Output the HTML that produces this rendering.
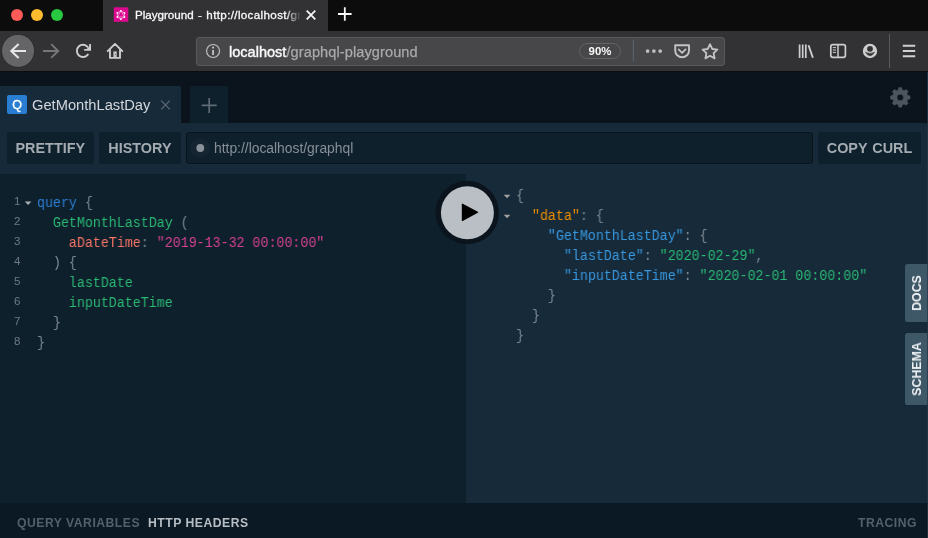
<!DOCTYPE html>
<html>
<head>
<meta charset="utf-8">
<title>Playground</title>
<style>
*{box-sizing:border-box;margin:0;padding:0}
html,body{width:928px;height:538px;overflow:hidden;background:#0b141c}
body{font-family:"Liberation Sans",sans-serif;position:relative;color:#fff}
.abs{position:absolute;will-change:transform}
/* ---------- browser chrome ---------- */
#titlebar{left:0;top:0;width:928px;height:31px;background:#0c0c0d}
#ffTab{left:103px;top:0;width:225px;height:31px;background:#323234}
#navbar{left:0;top:30.5px;width:928px;height:41px;background:#323234;border-bottom:1px solid #0c0c0d}
.light{width:12px;height:12px;border-radius:50%;top:9.25px}
#tabTitle{left:135px;top:7.2px;font-size:11.6px;color:#f9f9fa;white-space:nowrap;width:166px;overflow:hidden;height:16px;line-height:16px;word-spacing:1.2px;-webkit-text-stroke:.3px #f9f9fa}
#tabTitle span{letter-spacing:.36px}
#tabFade{left:286px;top:4px;width:16px;height:22px;background:linear-gradient(90deg,rgba(50,50,52,0),#323234 95%)}
#urlbar{left:196px;top:36.5px;width:529px;height:29px;background:#474749;border:1px solid #5a5a5c;border-radius:3px}
#urlText{left:228.9px;top:43.5px;font-size:14.55px;line-height:17px;color:#f9f9fa;white-space:nowrap;-webkit-text-stroke:.4px #f9f9fa}
#urlText span{color:#a9a9ab;-webkit-text-stroke:.25px #a9a9ab;letter-spacing:.1px}
#zoomPill{left:579px;top:43px;width:42px;height:16px;border:1px solid #636365;border-radius:8px;font-size:11.4px;line-height:14px;text-align:center;color:#f9f9fa;font-weight:bold}
/* ---------- playground ---------- */
#pgTab{left:0;top:86px;width:181px;height:38px;background:#172a3a;border-radius:0 2px 0 0}
#pgPlus{left:190px;top:86px;width:38px;height:37px;background:#0f202d;border-radius:2px 2px 0 0}
#qBadge{left:7px;top:94.8px;width:20px;height:19.2px;background:#2a7ed2;border-radius:2px;font-size:12.5px;font-weight:normal;-webkit-text-stroke:.35px #fff;line-height:20.6px;text-align:center;color:#fff}
#pgTabName{left:32px;top:97px;font-size:14.7px;line-height:17px;color:#d3d7db;white-space:nowrap}
#toolbar{left:0;top:123px;width:928px;height:53px;background:#172a3a}
.btn{top:132px;height:31.7px;background:#0f202d;border-radius:2px;font-size:14.4px;line-height:32px;text-align:center;color:#a3abb1;font-weight:bold;letter-spacing:0;white-space:nowrap}
#endpoint{left:186px;top:132px;width:627px;height:31.7px;background:#0f202d;border:1px solid #09141c;border-radius:3px}
#endpointText{left:213.7px;top:139.6px;font-size:13.85px;line-height:16px;color:#868f96;white-space:nowrap}
#leftPane{left:0;top:174px;width:466px;height:329px;background:#0f202d}
#rightPane{left:466px;top:173px;width:462px;height:330px;background:#172a3a}
#bottomBar{left:0;top:503px;width:928px;height:35px;background:#0b1924}
.code{font-family:"Liberation Mono",monospace;font-size:14px;line-height:20px;white-space:pre;transform:scaleX(.95);transform-origin:0 0;will-change:transform}
.ln{font-family:"Liberation Sans",sans-serif;font-size:11.6px;line-height:20px;color:#6d7a84;left:0;width:20.5px;text-align:right;margin-top:-.8px}
.bl{font-size:12.2px;font-weight:bold;letter-spacing:.5px;top:516px;line-height:15px;white-space:nowrap}
.side{left:905.1px;width:23px;background:#3f5868;border-radius:2.5px 0 0 2.5px}
.sideText{width:80px;height:20px;text-align:center;font-size:13px;font-weight:bold;color:#eef1f3;white-space:nowrap;transform:rotate(-90deg) scaleX(.95);line-height:20px}
.kw{color:#2a7ed3}.fn{color:#29b973}.arg{color:#f77466}.str{color:#d64292}.p{color:#7d8b95}.prop{color:#3898df}.key{color:#f18f01}.val{color:#29b973}
</style>
</head>
<body>
<!-- Title bar -->
<div id="titlebar" class="abs"></div>
<div id="ffTab" class="abs"></div>
<div class="abs light" style="left:11.25px;background:#fc5b57"></div>
<div class="abs light" style="left:31.2px;background:#fdbc2e"></div>
<div class="abs light" style="left:51.2px;background:#28c840"></div>
<div id="tabTitle" class="abs">Playground - <span>http://localhost/gr</span></div>
<div id="tabFade" class="abs"></div>
<!-- Nav bar -->
<div id="navbar" class="abs"></div>
<div id="urlbar" class="abs"></div>
<div id="urlText" class="abs">localhost<span>/graphql-playground</span></div>
<div id="zoomPill" class="abs">90%</div>

<!-- chrome icons -->
<svg class="abs" style="left:0;top:0" width="928" height="72" viewBox="0 0 928 72" fill="none">
 <!-- favicon -->
 <rect x="113.8" y="7.3" width="14.5" height="14.5" fill="#dc0990"/>
 <g stroke="#fff" stroke-width="0.7" fill="none" opacity=".7">
  <path d="M120.9 10.85 L124.45 12.9 L124.45 17 L120.9 19.05 L117.35 17 L117.35 12.9 Z"/>
  <path d="M120.9 10.85 L124.45 17 L117.35 17 Z"/>
 </g>
 <g fill="#fff">
  <circle cx="120.9" cy="10.85" r="0.9"/><circle cx="124.45" cy="12.9" r="0.9"/><circle cx="124.45" cy="17" r="0.9"/>
  <circle cx="120.9" cy="19.05" r="0.9"/><circle cx="117.35" cy="17" r="0.9"/><circle cx="117.35" cy="12.9" r="0.9"/>
 </g>
 <!-- tab close -->
 <path d="M306.7 10.7 L315.3 19.4 M315.3 10.7 L306.7 19.4" stroke="#f9f9fa" stroke-width="1.7"/>
 <!-- new tab + -->
 <path d="M344.8 7.2 V20.8 M338 14 H351.6" stroke="#f9f9fa" stroke-width="1.8"/>
 <!-- back -->
 <circle cx="18.05" cy="50.85" r="16.5" fill="#656567" stroke="#262628" stroke-width="0.8"/>
 <path d="M26 51 H11.2 M18.6 44 L11.3 51 L18.6 58" stroke="#e6e6e7" stroke-width="2.1" stroke-linecap="butt" stroke-linejoin="miter"/>
 <!-- forward (disabled) -->
 <path d="M43 51 H57.8 M51.2 44.1 L58.2 51 L51.2 57.9" stroke="#767678" stroke-width="2" stroke-linecap="butt" stroke-linejoin="miter"/>
 <!-- reload -->
 <path d="M87.6 46.9 A6.1 6.1 0 1 0 87.8 54.6" stroke="#cdcdce" stroke-width="1.9" stroke-linecap="round"/>
 <path d="M90.1 43.9 V49.9 H84.2" stroke="#cdcdce" stroke-width="1.8" stroke-linejoin="miter"/>
 <path d="M90.1 45.6 V49.9 H85.8 Z" fill="#cdcdce"/>
 <!-- home -->
 <path d="M107.7 51.2 L115 43.9 L122.3 51.2 M110 49.4 V57.9 H120 V49.4" stroke="#cdcdce" stroke-width="1.9" stroke-linecap="round" stroke-linejoin="round"/>
 <rect x="113.4" y="51.4" width="3.3" height="6.5" fill="#c6c6c7"/><circle cx="115.4" cy="54.5" r=".55" fill="#5a5a5c"/>
 <!-- url info -->
 <circle cx="213.05" cy="51" r="6.5" stroke="#c4c4c5" stroke-width="1.15"/>
 <path d="M213.05 50 V54.9" stroke="#c4c4c5" stroke-width="1.8"/>
 <circle cx="213.05" cy="47.6" r="1.05" fill="#c4c4c5"/>
 <!-- separator in urlbar -->
 <path d="M633.4 39.5 V61.5" stroke="#5b6778" stroke-width="1"/>
 <!-- dots -->
 <circle cx="647.6" cy="51.1" r="1.85" fill="#bdbdbe"/><circle cx="653.9" cy="51.1" r="1.85" fill="#bdbdbe"/><circle cx="660.2" cy="51.1" r="1.85" fill="#bdbdbe"/>
 <!-- pocket -->
 <path d="M675.2 45.2 H689 V50.4 A6.9 6.9 0 0 1 675.2 50.4 Z" stroke="#c4c4c5" stroke-width="1.9" stroke-linejoin="round"/>
 <path d="M678.6 49.4 L682.1 52.8 L685.6 49.4" stroke="#c4c4c5" stroke-width="1.7" stroke-linecap="round" stroke-linejoin="round"/>
 <!-- star -->
 <path d="M710 44.2 L712.3 49 L717.4 49.6 L713.6 53.2 L714.6 58.4 L710 55.8 L705.4 58.4 L706.4 53.2 L702.6 49.6 L707.7 49 Z" stroke="#c4c4c5" stroke-width="1.8" stroke-linejoin="round"/>
 <!-- library -->
 <path d="M799.6 44.4 V58 M802.7 44.4 V58 M805.8 44.4 V58" stroke="#cdcdce" stroke-width="1.7"/>
 <path d="M808.5 45.2 L812.9 57.7" stroke="#cdcdce" stroke-width="1.9"/>
 <!-- sidebar -->
 <rect x="830.8" y="44.7" width="14.6" height="12.6" rx="2" stroke="#cdcdce" stroke-width="1.7"/>
 <path d="M838 44.7 V57.3" stroke="#cdcdce" stroke-width="1.5"/>
 <path d="M832.8 47.6 H836 M832.8 50 H836 M832.8 52.4 H836" stroke="#cdcdce" stroke-width="1"/>
 <!-- account -->
 <circle cx="870" cy="51" r="7.2" fill="#cdcdce"/>
 <circle cx="870" cy="48.8" r="2.9" fill="#323234"/>
 <path d="M865.4 52.2 Q870 54.6 874.6 52.2 Q870 59.4 865.4 52.2 Z" fill="#323234" stroke="#323234" stroke-width=".5" stroke-linejoin="round"/>
 <!-- toolbar separator -->
 <path d="M889.5 34 V68" stroke="#5a5a5c" stroke-width="1"/>
 <!-- hamburger -->
 <path d="M902.8 45.8 H915.2 M902.8 51 H915.2 M902.8 56.2 H915.2" stroke="#d0d0d1" stroke-width="2"/>
</svg>

<!-- Playground tabs -->
<div id="pgTab" class="abs"></div>
<div id="pgPlus" class="abs"></div>
<div id="qBadge" class="abs">Q</div>
<div id="pgTabName" class="abs">GetMonthLastDay</div>

<svg class="abs" style="left:880px;top:82px" width="40" height="30" viewBox="880 82 40 30"><path fill-rule="evenodd" fill="#4c555d" stroke="#4c555d" stroke-width="0.5" stroke-linejoin="round" d="M898.20 89.98 L898.77 87.61 L901.73 87.61 L902.30 89.98 L904.05 90.70 L906.13 89.43 L908.22 91.52 L906.95 93.60 L907.67 95.35 L910.04 95.92 L910.04 98.88 L907.67 99.45 L906.95 101.20 L908.22 103.28 L906.13 105.37 L904.05 104.10 L902.30 104.82 L901.73 107.19 L898.77 107.19 L898.20 104.82 L896.45 104.10 L894.37 105.37 L892.28 103.28 L893.55 101.20 L892.83 99.45 L890.46 98.88 L890.46 95.92 L892.83 95.35 L893.55 93.60 L892.28 91.52 L894.37 89.43 L896.45 90.70 Z M903.45 97.40 A3.20 3.20 0 1 0 897.05 97.40 A3.20 3.20 0 1 0 903.45 97.40 Z"/></svg>
<!-- Toolbar -->
<div id="toolbar" class="abs"></div>
<div class="abs btn" style="left:7px;width:86.6px">PRETTIFY</div>
<div class="abs btn" style="left:99px;width:81.8px">HISTORY</div>
<div id="endpoint" class="abs"></div>
<div id="endpointText" class="abs">http://localhost/graphql</div>
<div class="abs btn" style="left:818px;width:103px;word-spacing:1px">COPY CURL</div>

<svg class="abs" style="left:0;top:72px" width="928" height="110" viewBox="0 72 928 110" fill="none">
 <path d="M161.2 100.6 L169.8 109.4 M169.8 100.6 L161.2 109.4" stroke="#5d6a74" stroke-width="1.2"/>
 <path d="M209.2 97.9 V112.9 M201.7 105.4 H216.7" stroke="#5f6c76" stroke-width="1.7"/>
 <circle cx="200" cy="148" r="10" fill="#152531"/>
 <circle cx="200.3" cy="148" r="3.9" fill="#8a9299"/>
</svg>

<!-- Editors -->
<div id="leftPane" class="abs"></div>
<div id="rightPane" class="abs"></div>

<div class="abs ln" style="top:192px">1</div>
<div class="abs ln" style="top:212px">2</div>
<div class="abs ln" style="top:232px">3</div>
<div class="abs ln" style="top:252px">4</div>
<div class="abs ln" style="top:272px">5</div>
<div class="abs ln" style="top:292px">6</div>
<div class="abs ln" style="top:312px">7</div>
<div class="abs ln" style="top:332px">8</div>

<div class="abs code" style="left:37px;top:193px"><span class="kw">query</span> <span class="p">{</span>
  <span class="fn">GetMonthLastDay</span> <span class="p">(</span>
    <span class="arg">aDateTime</span><span class="p">:</span> <span class="str">"2019-13-32 00:00:00"</span>
  <span class="p">) {</span>
    <span class="fn">lastDate</span>
    <span class="fn">inputDateTime</span>
  <span class="p">}</span>
<span class="p">}</span></div>

<div class="abs code" style="left:516px;top:186px"><span class="p">{</span>
  <span class="key">"data"</span><span class="p">: {</span>
    <span class="prop">"GetMonthLastDay"</span><span class="p">: {</span>
      <span class="prop">"lastDate"</span><span class="p">:</span> <span class="val">"2020-02-29"</span><span class="p">,</span>
      <span class="prop">"inputDateTime"</span><span class="p">:</span> <span class="val">"2020-02-01 00:00:00"</span>
    <span class="p">}</span>
  <span class="p">}</span>
<span class="p">}</span></div>

<!-- Play button -->
<svg class="abs" style="left:430px;top:176px" width="76" height="74" viewBox="430 176 76 74">
<circle cx="467.25" cy="212.55" r="31.7" fill="#0b141c"/>
<circle cx="467.4" cy="212.75" r="26.5" fill="#b9bfc4"/>
<path d="M462.4 204.2 L462.4 220.4 L477.6 212.3 Z" fill="#000" stroke="#000" stroke-width="1.2" stroke-linejoin="round"/>
</svg>
<!-- fold arrows -->
<svg class="abs" style="left:0;top:173px" width="928" height="330" viewBox="0 173 928 330">
<path d="M24.8 201.6h6.6l-3.3 3.5z" fill="#a9aeb2"/>
<path d="M503.7 194.7h6.7l-3.35 3.5z" fill="#a3a09d"/>
<path d="M503.7 214.7h6.7l-3.35 3.5z" fill="#a3a09d"/>
</svg>

<!-- Side buttons -->
<div class="abs side" style="top:264.2px;height:57.6px"></div>
<div class="abs side" style="top:332.8px;height:72.4px"></div>
<div class="abs sideText" style="left:876.8px;top:283px">DOCS</div>
<div class="abs sideText" style="left:876.8px;top:359px">SCHEMA</div>

<!-- Bottom bar -->
<div id="bottomBar" class="abs"></div>
<div class="abs bl" style="left:17px;color:#53616c">QUERY VARIABLES</div>
<div class="abs bl" style="left:148px;color:#b7bec4">HTTP HEADERS</div>
<div class="abs bl" style="left:858px;color:#53616c">TRACING</div>
<div class="abs" style="left:927px;top:72px;width:1px;height:466px;background:#24384a;opacity:.75"></div>
</body>
</html>
